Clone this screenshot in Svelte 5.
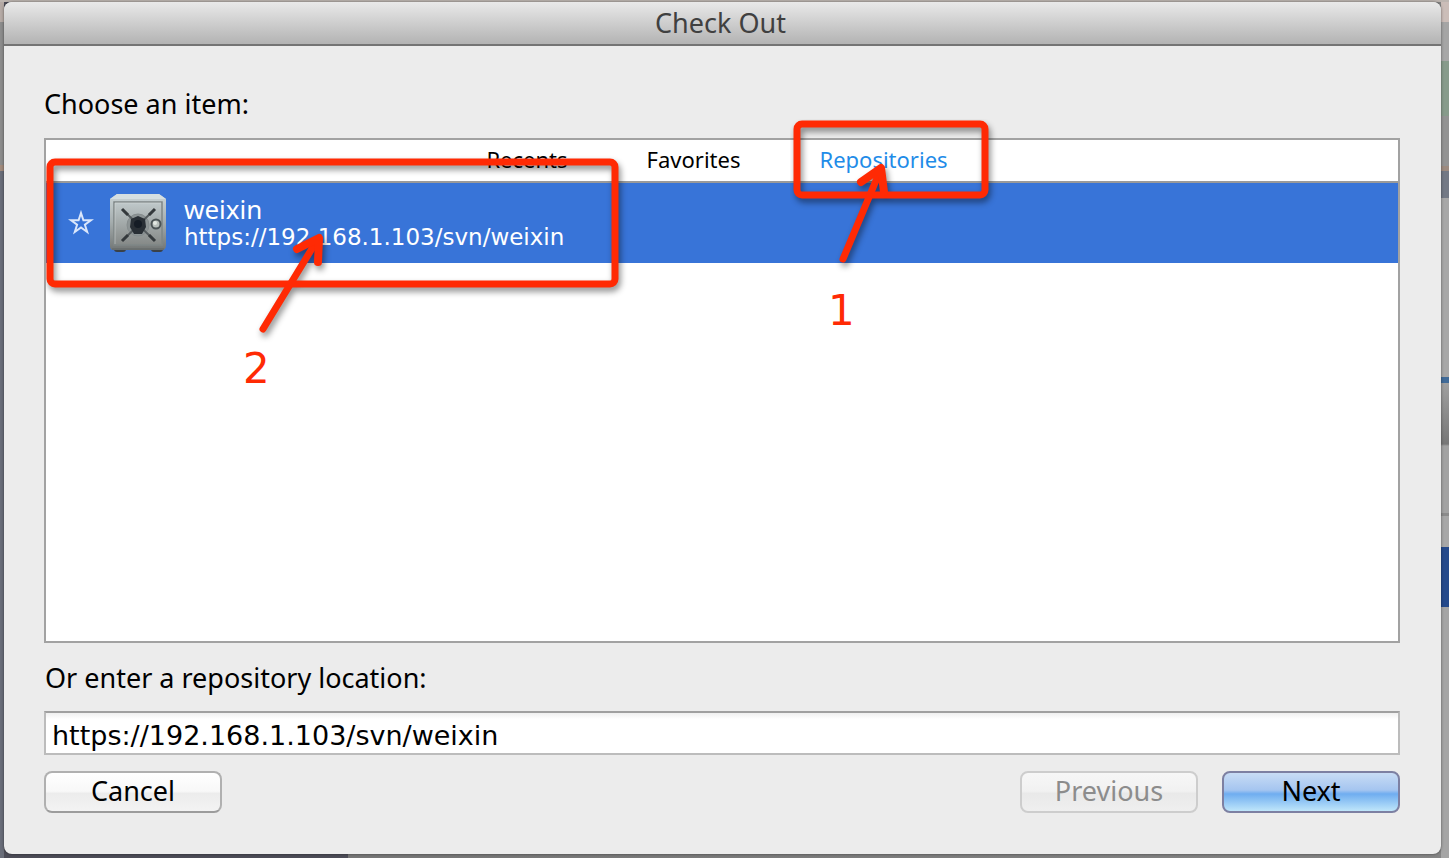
<script lang="ts">
	type Repository = { name: string; url: string };

	const tabs = ['Recents', 'Favorites', 'Repositories'];
	const repositories: Repository[] = [{ name: 'weixin', url: 'https://192.168.1.103/svn/weixin' }];

	let activeTab = $state('Repositories');
	let selected = $state(0);
	let location = $state('https://192.168.1.103/svn/weixin');

	function select(index: number) {
		selected = index;
		location = repositories[index].url;
	}
</script>

<div class="desktop">
	<div class="backdrop" aria-hidden="true"></div>
	<main class="dialog">
		<header class="titlebar"><h1>Check Out</h1></header>
		<form class="content" onsubmit={(e) => e.preventDefault()}>
			<h2 class="label">Choose an item:</h2>
			<section class="browser">
				<nav class="tabs">
					{#each tabs as tab}
						<div class="tab-slot">
							<button type="button" class="tab" class:active={activeTab === tab} onclick={() => (activeTab = tab)}>
								{tab}
							</button>
							{#if tab === 'Repositories'}
								<svg class="note note-tab" width="210" height="230" viewBox="0 0 210 230">
									<g class="marks">
										<rect x="7" y="5" width="188" height="71" rx="5" />
										<path d="M53 140L90 52" />
										<path class="head" d="M71 63L91 49L94 73" />
									</g>
									<text x="38" y="206">1</text>
								</svg>
							{/if}
						</div>
					{/each}
				</nav>
				<div class="rows">
					{#each repositories as repo, i}
						<div class="row" class:selected={selected === i}>
							<button type="button" class="star" aria-label="Add to favorites">
								<svg width="26" height="26" viewBox="0 0 26 26">
									<path d="M13 3L15.4 10.3H23L16.9 14.7L19.2 22L13 17.5L6.8 22L9.1 14.7L3 10.3H10.6Z" />
								</svg>
							</button>
							<button type="button" class="repo" onclick={() => select(i)}>
								<svg class="safe" width="60" height="62" viewBox="0 0 60 62">
									<defs>
										<linearGradient id="safe-body" x2="0" y2="1">
											<stop offset="0" stop-color="#cbd5d7" />
											<stop offset="0.5" stop-color="#a5adae" />
											<stop offset="1" stop-color="#727675" />
										</linearGradient>
										<linearGradient id="safe-door" x2="0" y2="1">
											<stop offset="0" stop-color="#c0c9cb" />
											<stop offset="1" stop-color="#858987" />
										</linearGradient>
									</defs>
									<rect x="6" y="54" width="12" height="6" rx="3" fill="#3b4147" />
									<rect x="43" y="54" width="12" height="6" rx="3" fill="#3b4147" />
									<path d="M9 2H51L58 7V53Q58 58 54 58H5Q2 58 2 54V7Z" fill="url(#safe-body)" />
									<path d="M9 2H51L58 7H2Z" fill="#d5dfe1" />
									<path d="M4 57H56" stroke="#616766" />
									<rect x="6" y="10" width="48" height="43" fill="url(#safe-door)" stroke="#7f8787" stroke-width="1.5" />
									<path d="M7 52V11H53" fill="none" stroke="#d8dede" opacity="0.5" />
									<circle cx="30" cy="33" r="11" fill="#8d9495" stroke="#858c8d" />
									<path d="M15 18L46 48M46 18L15 48" stroke="#555b5e" stroke-width="2" />
									<path d="M14 17L20 23M47 17L41 23M14 49L20 43M47 49L41 43" stroke="#34393c" stroke-width="3" />
									<path d="M30 24L37 27L38 35L34 42H26L22 35L23 27Z" fill="#292f35" />
									<circle cx="30" cy="32" r="4" fill="#151c25" />
									<circle cx="48" cy="32" r="4.5" fill="#b9c0bc" stroke="#4b5355" stroke-width="2" />
									<circle cx="47" cy="31" r="2" fill="#e3e8e2" />
								</svg>
								<span class="repo-text">
									<span class="repo-name">{repo.name}</span>
									<span class="repo-url">{repo.url}</span>
								</span>
							</button>
							{#if i === 0}
								<svg class="note note-row" width="600" height="250" viewBox="0 0 600 250">
									<g class="marks">
										<rect x="4" y="8" width="565" height="122" rx="5" />
										<path d="M217 175L270 88" />
										<path class="head" d="M251 95L273 84L272 108" />
									</g>
									<text x="197" y="229">2</text>
								</svg>
							{/if}
						</div>
					{/each}
				</div>
			</section>
			<label class="label location-label" for="location">Or enter a repository location:</label>
			<input id="location" class="location" type="text" spellcheck="false" bind:value={location} />
			<footer class="actions">
				<button type="button" class="btn">Cancel</button>
				<span class="spacer"></span>
				<button type="button" class="btn" disabled>Previous</button>
				<button type="submit" class="btn primary">Next</button>
			</footer>
		</form>
	</main>
</div>

<style>
	:global(body) {
		margin: 0;
	}
	.desktop {
		position: relative;
		box-sizing: border-box;
		display: flex;
		min-height: 100vh;
		padding: 2px 8px 4px 4px;
		overflow: hidden;
		background: linear-gradient(90deg, #4c4c57 0 24%, #777 24% 30%, #858585 100%);
		font-family: 'Noto Sans', 'Open Sans', sans-serif;
		color: #000;
	}
	/* slivers of the windows behind the dialog */
	.backdrop {
		position: absolute;
		inset: 0;
		background:
			linear-gradient(#bdb5b0, #bdb5b0) top / 100% 2px no-repeat,
			linear-gradient(#b5aaa5 0 22px, #8c8c8c 22px 165px, #a28b7d 165px 171px, #696d79 171px) left / 4px 100% no-repeat,
			linear-gradient(
					#cbbdb8 0 22px,
					#a5a5a5 22px 50px,
					#a7a7a7 50px 61px,
					#879b8b 61px 116px,
					#939393 116px 166px,
					#9d8b80 166px 171px,
					#737985 171px 198px,
					#a7a7a7 198px 377px,
					#416b98 377px 383px,
					#a0a0a0 383px,
					#777 444px,
					#a2a2a2 446px 513px,
					#8b8b8b 513px 516px,
					#a7a7a7 516px 547px,
					#24498b 547px 607px,
					#a5a5a5 607px
				)
				right / 8px 100% no-repeat;
	}
	.dialog {
		position: relative;
		flex: 1;
		min-width: 0;
		display: flex;
		flex-direction: column;
		border-radius: 8px;
		background: #ececec;
		box-shadow: 0 0 3px rgba(0, 0, 0, 0.5);
	}
	.titlebar {
		box-sizing: border-box;
		height: 44px;
		padding-right: 4px;
		border-bottom: 2px solid #747474;
		border-radius: 8px 8px 0 0;
		background: linear-gradient(#e9e9e9, #b3b3b3);
		text-align: center;
	}
	.titlebar h1 {
		margin: 0;
		font-size: 27px;
		font-weight: 400;
		line-height: 42px;
		color: #404040;
	}
	.content {
		flex: 1;
		display: flex;
		flex-direction: column;
		padding: 42px 41px 41px 40px;
	}
	.label {
		margin: 0 0 18px;
		font-size: 27px;
		font-weight: 400;
		line-height: 32px;
	}
	.browser {
		flex: 1;
		display: flex;
		flex-direction: column;
		border: 2px solid #a2a2a2;
		background: #fff;
	}
	.tabs {
		display: flex;
		justify-content: center;
		gap: 79px;
		height: 41px;
		padding-right: 10px;
		border-bottom: 2px solid #9a9a9a;
	}
	.tab-slot {
		position: relative;
		display: flex;
	}
	.tab {
		padding: 0 0 4px;
		border: 0;
		background: none;
		font: inherit;
		font-size: 22px;
		line-height: 36px;
		color: #000;
	}
	.tab.active {
		color: #1f8ce8;
	}
	.row {
		position: relative;
		display: flex;
		align-items: center;
		height: 80px;
		padding-left: 22px;
	}
	.row.selected {
		background: #3874d8;
		color: #fff;
	}
	.star {
		display: flex;
		padding: 0;
		border: 0;
		background: none;
	}
	.star path {
		fill: none;
		stroke: #dbe7fb;
		stroke-width: 2;
	}
	.repo {
		flex: 1;
		display: flex;
		align-items: center;
		gap: 16px;
		padding: 0 0 0 14px;
		border: 0;
		background: none;
		font: inherit;
		color: inherit;
		text-align: left;
	}
	.repo-text {
		display: flex;
		flex-direction: column;
	}
	.repo-name {
		font-size: 26px;
		line-height: 28px;
	}
	.repo-url {
		font-family: 'DejaVu Sans', sans-serif;
		font-size: 23px;
		line-height: 28px;
	}
	.location-label {
		margin: 19px 0 17px;
		padding-left: 1px;
	}
	.location {
		box-sizing: border-box;
		width: 100%;
		height: 44px;
		padding: 4px 6px 0;
		border: 2px solid #bcbcbc;
		border-top-color: #a0a0a0;
		border-radius: 0;
		outline: 0;
		background: linear-gradient(#f0f0f0, #fff 6px);
		font-family: 'DejaVu Sans', sans-serif;
		font-size: 27px;
		color: #000;
	}
	.actions {
		display: flex;
		gap: 24px;
		margin-top: 16px;
	}
	.spacer {
		flex: 1;
	}
	.btn {
		box-sizing: border-box;
		width: 178px;
		height: 42px;
		padding: 0 0 2px;
		border: 2px solid #b0b0b0;
		border-bottom-color: #9c9c9c;
		border-radius: 8px;
		background: linear-gradient(#fff, #f8f8f8 48%, #ececec 54%, #f3f3f3);
		font: inherit;
		font-size: 27px;
		line-height: 36px;
		color: #000;
	}
	.btn:disabled {
		border-color: #cdcdcd;
		background: linear-gradient(#f7f7f7, #f1f1f1 48%, #e9e9e9 54%, #efefef);
		color: #8c8c8c;
	}
	.btn.primary {
		border-color: #7d80a2;
		background: linear-gradient(#c8dcf5, #a5c5f0 45%, #6fadf0 55%, #bfe6fa);
	}
	.note {
		position: absolute;
		z-index: 2;
		pointer-events: none;
	}
	.marks {
		fill: none;
		stroke: #ff2a04;
		stroke-width: 7;
		stroke-linecap: round;
		stroke-linejoin: round;
		filter: drop-shadow(2px 4px 3px rgba(0, 0, 0, 0.45));
	}
	.head {
		stroke-width: 8;
	}
	.note text {
		font-family: 'DejaVu Sans', sans-serif;
		font-size: 42px;
		fill: #ff2a04;
	}
	.note-tab {
		top: -21px;
		left: -29px;
	}
	.note-row {
		top: -29px;
		left: 0;
	}
</style>
